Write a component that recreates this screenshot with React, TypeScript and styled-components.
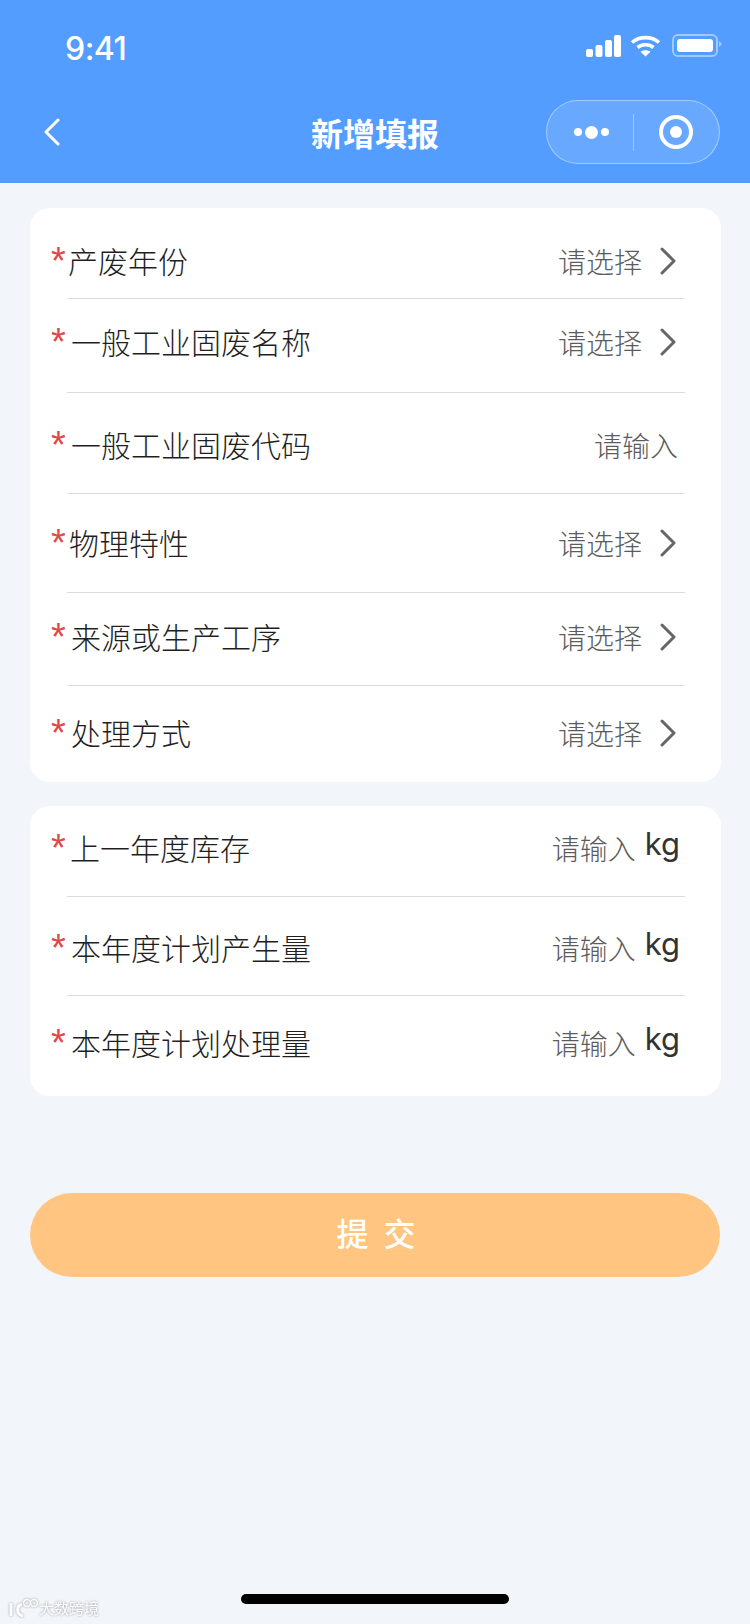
import styled, { createGlobalStyle } from 'styled-components';

const GlobalStyle = createGlobalStyle`
  html, body {
    margin: 0;
    padding: 0;
    background: #f2f5fa;
    font-family: 'Noto Sans CJK SC', 'Noto Sans', sans-serif;
  }
`;

type Field = {
  label: string;
  placeholder: string;
  height: number;
  top: number;
  labelGap: number;
  kind: 'select' | 'input' | 'unit';
};

const wasteFields: Field[] = [
  { label: '产废年份', placeholder: '请选择', height: 91, top: 32, labelGap: 1, kind: 'select' },
  { label: '一般工业固废名称', placeholder: '请选择', height: 94, top: 22, labelGap: 4, kind: 'select' },
  { label: '一般工业固废代码', placeholder: '请输入', height: 101, top: 31, labelGap: 4, kind: 'input' },
  { label: '物理特性', placeholder: '请选择', height: 99, top: 28, labelGap: 2, kind: 'select' },
  { label: '来源或生产工序', placeholder: '请选择', height: 93, top: 23, labelGap: 4, kind: 'select' },
  { label: '处理方式', placeholder: '请选择', height: 96, top: 26, labelGap: 4, kind: 'select' },
];

const amountFields: Field[] = [
  { label: '上一年度库存', placeholder: '请输入', height: 91, top: 21, labelGap: 3, kind: 'unit' },
  { label: '本年度计划产生量', placeholder: '请输入', height: 99, top: 30, labelGap: 4, kind: 'unit' },
  { label: '本年度计划处理量', placeholder: '请输入', height: 100, top: 26, labelGap: 4, kind: 'unit' },
];

function Chevron() {
  return (
    <ChevronIcon viewBox="0 0 18 28" fill="none">
      <path d="M3 2l12 12L3 26" stroke="#666" strokeWidth="3" strokeLinecap="round" strokeLinejoin="round" />
    </ChevronIcon>
  );
}

function FormRow({ field, last }: { field: Field; last: boolean }) {
  return (
    <Row $height={field.height} $top={field.top}>
      <RowContent>
        <Star>*</Star>
        <Label $gap={field.labelGap}>{field.label}</Label>
        <Placeholder $kind={field.kind}>{field.placeholder}</Placeholder>
        {field.kind === 'select' && <Chevron />}
        {field.kind === 'unit' && <Unit>kg</Unit>}
      </RowContent>
      {!last && <Divider />}
    </Row>
  );
}

export default function App() {
  return (
    <Page>
      <GlobalStyle />
      <Header>
        <StatusBar>
          <Time>9:41</Time>
          <StatusIcons>
            <svg width="35" height="22" viewBox="0 0 35 22" fill="#fff">
              <rect x="0" y="14" width="7" height="8" rx="2" />
              <rect x="9.500" y="10" width="7" height="12" rx="2" />
              <rect x="19" y="5" width="7" height="17" rx="2" />
              <rect x="28" y="0" width="7" height="22" rx="2" />
            </svg>
            <svg width="31" height="22" viewBox="0 0 31 22" fill="none" stroke="#fff" strokeWidth="3.600">
              <path d="M2 7.500C9.500 1 21.500 1 29 7.500" />
              <path d="M7.500 12.500C12 8.800 19 8.800 23.500 12.500" />
              <path d="M15.500 21.500l-5-4.800c2.800-2 7.200-2 10 0z" fill="#fff" stroke="none" />
            </svg>
            <Battery>
              <BatteryFill />
            </Battery>
          </StatusIcons>
        </StatusBar>
        <NavBar>
          <BackButton viewBox="0 0 18 28" fill="none">
            <path d="M15 2L3 14l12 12" stroke="#fff" strokeWidth="3" strokeLinecap="round" strokeLinejoin="round" />
          </BackButton>
          <Title>新增填报</Title>
          <Capsule>
            <Dots>
              <Dot $size={8} />
              <Dot $size={13} />
              <Dot $size={8} />
            </Dots>
            <CapsuleDivider />
            <Target>
              <TargetCore />
            </Target>
          </Capsule>
        </NavBar>
      </Header>
      <Main>
        <Card>
          {wasteFields.map((f, i) => (
            <FormRow key={f.label} field={f} last={i === wasteFields.length - 1} />
          ))}
        </Card>
        <Card>
          {amountFields.map((f, i) => (
            <FormRow key={f.label} field={f} last={i === amountFields.length - 1} />
          ))}
        </Card>
        <SubmitButton>提 交</SubmitButton>
      </Main>
      <HomeBar />
      <Watermark>
        <svg width="30" height="20" viewBox="0 0 30 20" fill="none" stroke="#fff" strokeWidth="3">
          <path d="M3 5v13M14 6c-6 2-6 10 1 12" />
          <circle cx="19" cy="5" r="3.400" strokeWidth="1.500" />
          <circle cx="26" cy="5" r="3.400" strokeWidth="1.500" />
        </svg>
        <WatermarkText>大数跨境</WatermarkText>
      </Watermark>
    </Page>
  );
}

const Page = styled.div`
  position: relative;
  display: flex;
  flex-direction: column;
  width: 750px;
  height: 1624px;
  overflow: hidden;
  background: #f2f5fa;
`;

const Header = styled.header`
  height: 183px;
  background: #529dff;
  color: #fff;
`;

const StatusBar = styled.div`
  display: flex;
  justify-content: space-between;
  align-items: flex-start;
  height: 100px;
  padding: 32px 28px 0 65px;
  box-sizing: border-box;
`;

const Time = styled.div`
  font-family: Inter, sans-serif;
  font-size: 32px;
  font-weight: 500;
  line-height: 34px;
  letter-spacing: -0.5px;
`;

const StatusIcons = styled.div`
  display: flex;
  align-items: center;
  gap: 9px;
  margin-top: 2px;
`;

const Battery = styled.div`
  position: relative;
  width: 46px;
  height: 23px;
  padding: 3px;
  box-sizing: border-box;
  border: 2px solid rgba(255, 255, 255, 0.45);
  border-radius: 6px;
  margin-left: 2px;
  margin-right: 4px;

  &::after {
    content: '';
    position: absolute;
    right: -6px;
    top: 5px;
    border-left: 3px solid rgba(255, 255, 255, 0.5);
    border-top: 3px solid transparent;
    border-bottom: 3px solid transparent;
  }
`;

const BatteryFill = styled.div`
  height: 100%;
  background: #fff;
  border-radius: 3px;
`;

const NavBar = styled.div`
  display: grid;
  grid-template-columns: 1fr auto 1fr;
  align-items: center;
  height: 64px;
  padding: 0 30px;
`;

const BackButton = styled.svg`
  width: 18px;
  height: 28px;
  margin-left: 13px;
`;

const Title = styled.h1`
  margin: 0;
  font-size: 32px;
  font-weight: 700;
  line-height: 44px;
  color: #fff;
`;

const Capsule = styled.div`
  justify-self: end;
  display: flex;
  align-items: center;
  width: 174px;
  height: 64px;
  box-sizing: border-box;
  border: 1px solid rgba(255, 255, 255, 0.4);
  border-radius: 32px;
  background: rgba(255, 255, 255, 0.13);
`;

const Dots = styled.div`
  display: flex;
  align-items: center;
  justify-content: center;
  gap: 3px;
  width: 88px;
  margin-right: -2px;
`;

const Dot = styled.span<{ $size: number }>`
  width: ${(p) => p.$size}px;
  height: ${(p) => p.$size}px;
  border-radius: 50%;
  background: #fff;
`;

const CapsuleDivider = styled.div`
  width: 1px;
  height: 37px;
  background: rgba(255, 255, 255, 0.35);
`;

const Target = styled.div`
  display: flex;
  align-items: center;
  justify-content: center;
  width: 34px;
  height: 34px;
  margin-left: 25px;
  box-sizing: border-box;
  border: 4px solid #fff;
  border-radius: 50%;
`;

const TargetCore = styled.div`
  width: 12px;
  height: 12px;
  border-radius: 50%;
  background: #fff;
`;

const Main = styled.main`
  display: flex;
  flex-direction: column;
  gap: 24px;
  padding: 25px 29px 0 30px;
`;

const Card = styled.section`
  background: #fff;
  border-radius: 20px;
`;

const Row = styled.div<{ $height: number; $top: number }>`
  display: flex;
  flex-direction: column;
  justify-content: space-between;
  height: ${(p) => p.$height}px;
  padding-top: ${(p) => p.$top}px;
  box-sizing: border-box;
`;

const RowContent = styled.div`
  display: flex;
  align-items: center;
  height: 42px;
  padding: 0 44px 0 22px;
`;

const Star = styled.span`
  width: 15px;
  height: 42px;
  margin-left: -1px;
  margin-right: 1px;
  font-family: 'Liberation Sans', sans-serif;
  font-size: 38px;
  line-height: 42px;
  color: #dd4a4a;
`;

const Label = styled.span<{ $gap: number }>`
  flex: 1;
  margin-top: -3px;
  margin-left: ${(p) => p.$gap}px;
  font-size: 30px;
  font-weight: 300;
  line-height: 42px;
  color: #1f1f1f;
`;

const placeholderGap = { unit: 9, select: 17, input: -1 };

const Placeholder = styled.span<{ $kind: Field['kind'] }>`
  font-size: 28px;
  font-weight: 300;
  line-height: 42px;
  color: #5c5c5c;
  margin-right: ${(p) => placeholderGap[p.$kind]}px;
`;

const ChevronIcon = styled.svg`
  width: 18px;
  height: 28px;
`;

const Unit = styled.span`
  font-family: Inter, sans-serif;
  font-size: 31px;
  line-height: 42px;
  margin-top: -8px;
  margin-right: -3px;
  color: #333;
`;

const Divider = styled.div`
  height: 1px;
  margin: 0 36px 0 37px;
  background: #dcdcdc;
`;

const SubmitButton = styled.button`
  height: 84px;
  margin-top: 73px;
  margin-right: 1px;
  padding: 0 0 6px 6px;
  border: none;
  border-radius: 42px;
  background: #ffc581;
  color: #fff;
  font-family: inherit;
  font-size: 32px;
  font-weight: 500;
  letter-spacing: 4px;
`;

const HomeBar = styled.div`
  width: 268px;
  height: 10px;
  margin: auto auto 20px;
  border-radius: 5px;
  background: #000;
`;

const Watermark = styled.div`
  position: absolute;
  left: 8px;
  bottom: 6px;
  display: flex;
  align-items: center;
  gap: 1px;
  opacity: 0.9;
  filter: drop-shadow(0 0 1px #8a9098);
`;

const WatermarkText = styled.span`
  font-size: 15px;
  line-height: 20px;
  color: #fff;
`;
